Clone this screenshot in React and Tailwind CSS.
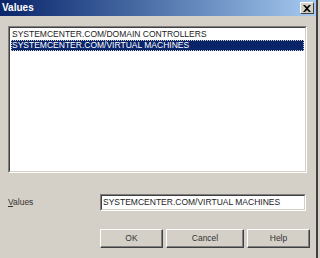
import React from "react";

const font = { fontFamily: '"Liberation Sans", Tahoma, sans-serif' };

function Btn({ children, className = "" }) {
  return (
    <button
      className={`h-[19px] bg-[#d4d0c8] border border-t-white border-l-white border-r-[#404040] border-b-[#404040] shadow-[inset_-1px_-1px_0_#808080] text-[8.5px] text-[#333] ${className}`}
    >
      {children}
    </button>
  );
}

export default function App() {
  return (
    <div className="w-[320px] h-[258px] bg-[#d4d0c8] flex" style={font}>
      <div className="w-[318px] h-full flex flex-col border-r-2 border-r-[#404040]">
        <div className="h-[16px] flex items-center justify-between pl-[2px] pr-[2px] bg-gradient-to-r from-[#0a246a] to-[#a6caf0]">
          <span className="text-white font-bold text-[10px] leading-none">Values</span>
          <div className="w-[14px] h-[12px] bg-[#d4d0c8] border border-t-white border-l-white border-r-[#404040] border-b-[#404040] flex items-center justify-center">
            <svg width="8" height="7" viewBox="0 0 8 7">
              <path d="M0 0 L2 0 L4 2 L6 0 L8 0 L5 3.5 L8 7 L6 7 L4 5 L2 7 L0 7 L3 3.5 Z" fill="black" />
            </svg>
          </div>
        </div>

        <div className="mt-[10px] ml-[8px] w-[299px] h-[147px] border border-t-[#808080] border-l-[#808080] border-r-white border-b-white">
          <div className="w-full h-full bg-white border border-t-[#404040] border-l-[#404040] border-r-[#d4d0c8] border-b-[#d4d0c8] pt-[1px] px-[1px] text-[8.5px] leading-[11px] whitespace-nowrap">
            <div className="h-[11px] pl-[1px] text-[#222]">SYSTEMCENTER.COM/DOMAIN CONTROLLERS</div>
            <div className="h-[11px] pl-[1px] bg-[#0a246a] text-white outline-1 outline-dotted outline-offset-[-1px] outline-[#d4d0c8]">
              SYSTEMCENTER.COM/VIRTUAL MACHINES
            </div>
          </div>
        </div>

        <div className="mt-[21px] flex items-center">
          <span className="ml-[8px] w-[92px] text-[8.5px] text-[#333]">
            <span className="underline">V</span>alues
          </span>
          <div className="w-[206px] h-[17px] border border-t-[#808080] border-l-[#808080] border-r-white border-b-white">
            <div className="w-full h-full bg-white border border-t-[#404040] border-l-[#404040] border-r-[#d4d0c8] border-b-[#d4d0c8] flex items-center pl-[1px] text-[8.5px] text-[#222] whitespace-nowrap">
              SYSTEMCENTER.COM/VIRTUAL MACHINES
            </div>
          </div>
        </div>

        <div className="mt-[18px] ml-[100px] flex gap-[3px]">
          <Btn className="w-[63px]">OK</Btn>
          <Btn className="w-[78px]">Cancel</Btn>
          <Btn className="w-[63px]">Help</Btn>
        </div>
      </div>
    </div>
  );
}
